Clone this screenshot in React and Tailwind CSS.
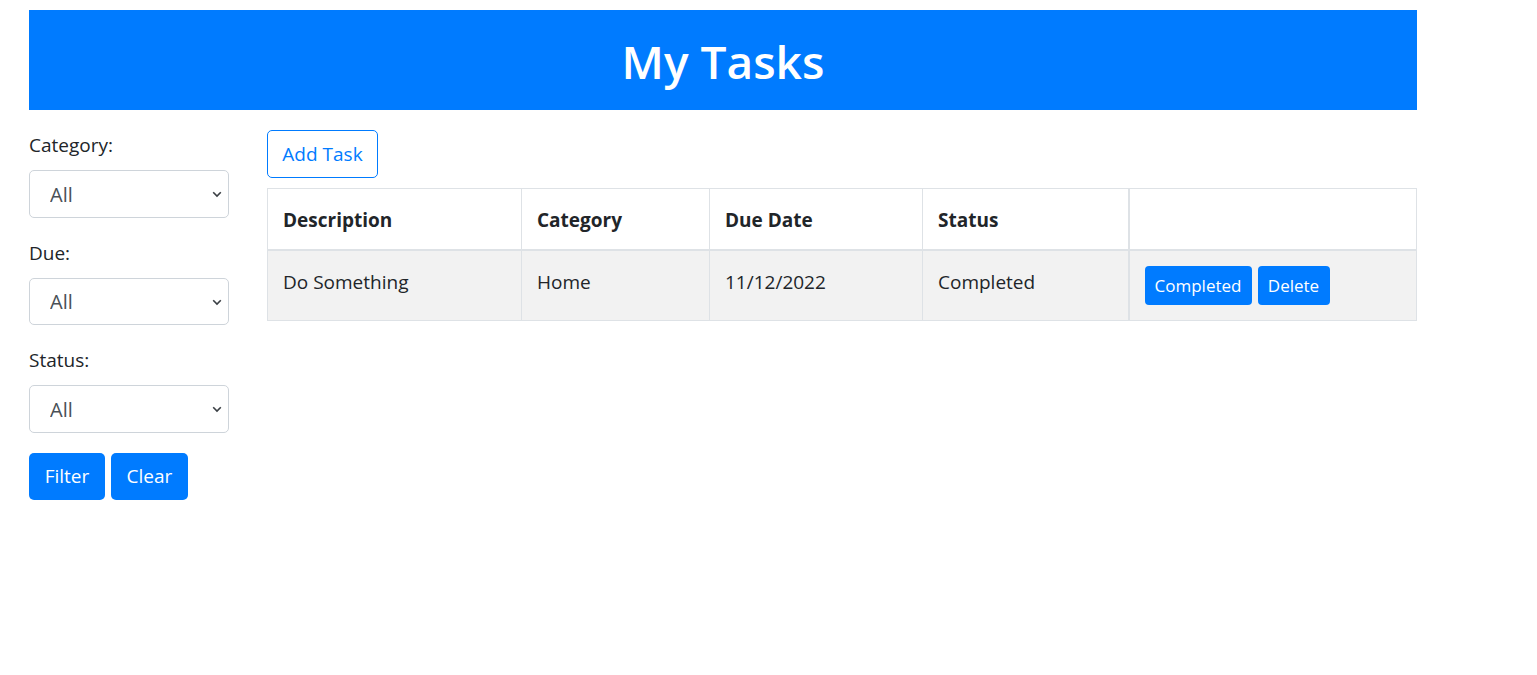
import React from "react";

const font = { fontFamily: '"Open Sans", "Noto Sans", sans-serif' };

function FilterSelect({ label }) {
  return (
    <div className="mb-[20px]">
      <label className="mb-[10px] block pt-[1px] text-[19px] leading-[29px] text-[#212529]">{label}</label>
      <div className="relative">
        <select className="block h-[47.5px] w-[200px] appearance-none rounded-[5px] border border-[#ced4da] bg-white pl-[20px] pt-[2px] text-[20px] text-[#495057] outline-none">
          <option>All</option>
        </select>
        <svg
          className="pointer-events-none absolute right-[7px] top-[21px]"
          width="10"
          height="7"
          viewBox="0 0 10 7"
        >
          <path d="M1.2 1.2 L5 5 L8.8 1.2" fill="none" stroke="#3a3f44" strokeWidth="1.6" />
        </svg>
      </div>
    </div>
  );
}

export default function App() {
  const headers = [
    { name: "Description", w: "w-[254px]" },
    { name: "Category", w: "w-[188px]" },
    { name: "Due Date", w: "w-[213px]" },
    { name: "Status", w: "w-[206px]" },
  ];

  return (
    <div className="min-h-[675px] bg-white pt-[10px] text-[#212529]" style={font}>
      <div className="ml-[29px] w-[1388px]">
        <header className="flex h-[100px] items-center justify-center bg-[#007bff]">
          <h1 className="pt-[2px] text-[46px] font-semibold leading-none text-white">My Tasks</h1>
        </header>

        <div className="mt-[20px] flex gap-[38px]">
          <aside className="w-[200px] shrink-0">
            <FilterSelect label="Category:" />
            <FilterSelect label="Due:" />
            <FilterSelect label="Status:" />
            <div className="flex gap-[6px]">
              <button className="h-[47px] w-[76px] rounded-[5px] bg-[#007bff] text-[19px] text-white">
                Filter
              </button>
              <button className="h-[47px] w-[77px] rounded-[5px] bg-[#007bff] text-[19px] text-white">
                Clear
              </button>
            </div>
          </aside>

          <main className="w-[1150px]">
            <button className="h-[48px] w-[111px] rounded-[5px] border border-[#007bff] pt-[1px] text-[19px] text-[#007bff]">
              Add Task
            </button>
            <table className="mt-[10px] w-[1150px] table-fixed border-collapse text-[19px] leading-[30px]">
              <thead>
                <tr>
                  {headers.map((h) => (
                    <th
                      key={h.name}
                      className={`${h.w} border border-b-2 border-[#dee2e6] px-[15px] pt-[16px] pb-[14px] text-left font-bold`}
                    >
                      {h.name}
                    </th>
                  ))}
                  <th className="border border-b-2 border-l-2 border-[#dee2e6]"></th>
                </tr>
              </thead>
              <tbody>
                <tr className="bg-[#f2f2f2]">
                  <td className="border border-[#dee2e6] px-[15px] pt-[16px] pb-[22px] align-top">Do Something</td>
                  <td className="border border-[#dee2e6] px-[15px] pt-[16px] align-top">Home</td>
                  <td className="border border-[#dee2e6] px-[15px] pt-[16px] align-top">11/12/2022</td>
                  <td className="border border-[#dee2e6] px-[15px] pt-[16px] align-top">Completed</td>
                  <td className="border border-l-2 border-[#dee2e6] px-[15px] pt-[15px] pb-[15px] align-top">
                    <div className="flex gap-[6px]">
                      <button className="h-[39px] w-[107px] rounded-[4px] bg-[#007bff] pt-[1px] text-[17px] text-white">
                        Completed
                      </button>
                      <button className="h-[39px] w-[72px] rounded-[4px] bg-[#007bff] pt-[1px] text-[17px] text-white">
                        Delete
                      </button>
                    </div>
                  </td>
                </tr>
              </tbody>
            </table>
          </main>
        </div>
      </div>
    </div>
  );
}
